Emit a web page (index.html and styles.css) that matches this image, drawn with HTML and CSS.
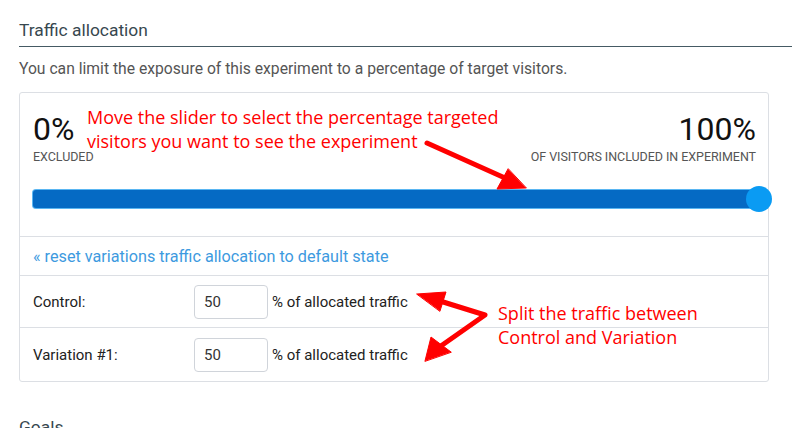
FILE: index.html
```html
<!DOCTYPE html>
<html>
<head>
<meta charset="utf-8">
<link rel="stylesheet" href="styles.css">
</head>
<body>
<div class="page">
  <h2 class="section-title">Traffic allocation</h2>
  <p class="desc">You can limit the exposure of this experiment to a percentage of target visitors.</p>
  <div class="card">
    <div class="slider-area">
      <div class="stats">
        <div class="stat">
          <div class="big">0%</div>
          <div class="small">EXCLUDED</div>
        </div>
        <div class="stat right">
          <div class="big">100%</div>
          <div class="small">OF VISITORS INCLUDED IN EXPERIMENT</div>
        </div>
      </div>
      <div class="track">
        <div class="fill"></div>
        <div class="knob"></div>
      </div>
    </div>
    <div class="reset-row"><a class="reset">« reset variations traffic allocation to default state</a></div>
    <div class="row">
      <span class="label">Control:</span>
      <span class="input">50</span>
      <span class="unit">% of allocated traffic</span>
    </div>
    <div class="row">
      <span class="label">Variation #1:</span>
      <span class="input">50</span>
      <span class="unit">% of allocated traffic</span>
    </div>
  </div>
  <h2 class="section-title next">Goals</h2>

  <div class="note note1">Move the slider to select the percentage targeted<br>visitors you want to see the experiment</div>
  <div class="note note2">Split the traffic between<br>Control and Variation</div>
  <svg class="arrows" width="792" height="428" viewBox="0 0 792 428">
    <g fill="#ff0000" stroke="#ff0000" stroke-linecap="round" stroke-linejoin="round">
      <path d="M427 143 L505 178" stroke-width="5" fill="none"/>
      <polygon points="526,188 497,189 508,169" stroke-width="1"/>
      <path d="M440 301 L485 315 L438 348" stroke-width="5" fill="none"/>
      <polygon points="417,294 446,292 440,311" stroke-width="1"/>
      <polygon points="425,361 431,337 451,352" stroke-width="1"/>
    </g>
  </svg>
</div>
</body>
</html>
```
FILE: styles.css
```css
html, body {
  margin: 0;
  padding: 0;
  background: #fff;
}
body {
  font-family: Roboto, "Liberation Sans", sans-serif;
  color: #222;
  overflow: hidden;
  width: 792px;
  height: 428px;
}
.page {
  position: relative;
  padding: 18px 0 0 19px;
}
.section-title {
  margin: 0;
  font-size: 17.4px;
  font-weight: 400;
  color: #37474f;
  line-height: 24px;
  padding-bottom: 4px;
  border-bottom: 1px solid #455a64;
}
.desc {
  margin: 12px 0 0;
  font-size: 15.7px;
  line-height: 20px;
  color: #555;
}
.card {
  margin-top: 13px;
  width: 748px;
  border: 1px solid #dcdfe4;
  border-radius: 3px;
}
.slider-area {
  padding: 18px 8px 28px 13px;
  border-bottom: 1px solid #dcdfe4;
}
.stats {
  display: flex;
  justify-content: space-between;
  padding-right: 4px;
}
.stat .big {
  font-size: 32px;
  line-height: 36px;
  color: #111;
  font-weight: 400;
}
.stat .small {
  font-size: 12.5px;
  line-height: 16px;
  color: #555;
  margin-top: 2px;
  letter-spacing: -0.05px;
}
.stat.right {
  text-align: right;
}
.track {
  position: relative;
  margin-top: 25px;
  height: 18px;
}
.fill {
  height: 18px;
  background: #056ac4;
  border-radius: 3px;
  box-shadow: 0 0 0 1px #5ab6f2;
}
.knob {
  position: absolute;
  right: -12px;
  top: -4px;
  width: 26px;
  height: 26px;
  border-radius: 50%;
  background: #0a9bf3;
}
.reset-row {
  height: 38px;
  display: flex;
  align-items: center;
  padding-left: 13px;
  border-bottom: 1px solid #dcdfe4;
}
.reset {
  color: #3d9ae0;
  font-size: 16.2px;
}
.row {
  display: flex;
  align-items: center;
  height: 51px;
  padding-left: 13px;
  border-bottom: 1px solid #dcdfe4;
  font-size: 15px;
  color: #222;
}
.row:last-child {
  border-bottom: none;
  height: 53px;
}
.label {
  width: 161px;
}
.input {
  box-sizing: border-box;
  width: 74px;
  height: 34px;
  border: 1px solid #d0d4da;
  border-radius: 4px;
  padding-left: 9px;
  display: flex;
  align-items: center;
  color: #333;
  font-size: 15px;
}
.unit {
  margin-left: 4px;
}
.section-title.next {
  margin-top: 33px;
  border-bottom: none;
}
.note {
  position: absolute;
  color: #ff0000;
  font-family: "Open Sans", "Noto Sans", sans-serif;
  font-size: 18px;
  line-height: 24px;
}
.note1 {
  left: 87px;
  top: 105px;
}
.note2 {
  left: 498px;
  top: 301px;
}
.arrows {
  position: absolute;
  left: 0;
  top: 0;
  pointer-events: none;
}
```
